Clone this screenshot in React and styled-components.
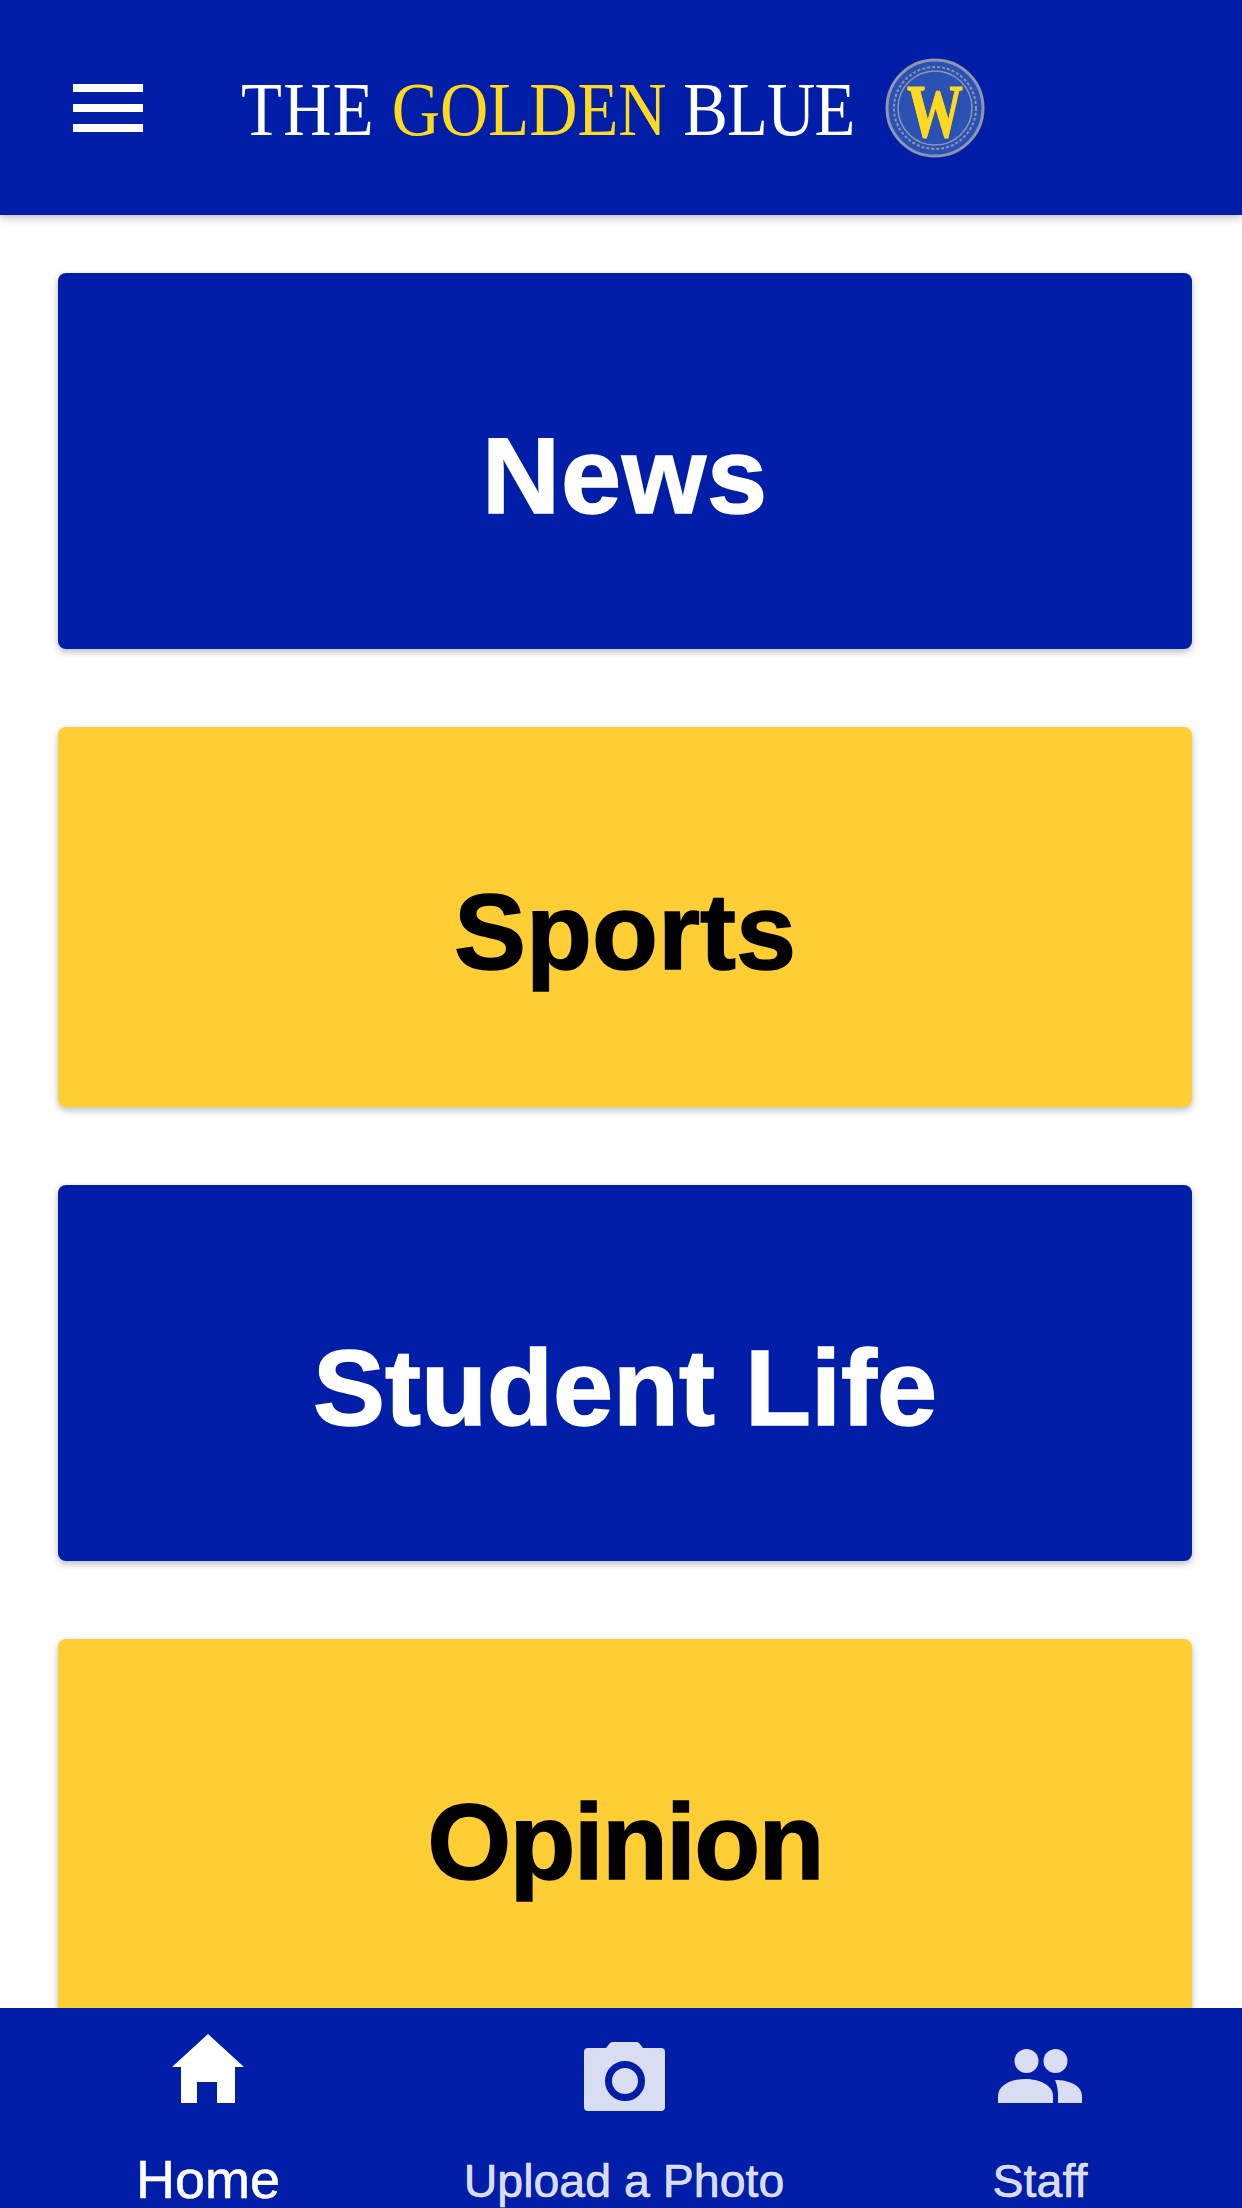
import styled, { createGlobalStyle } from "styled-components"

const BLUE = "#001ea8"
const YELLOW = "#ffcd34"

const GlobalStyle = createGlobalStyle`
  html, body {
    margin: 0;
    padding: 0;
    background: #fff;
    font-family: "Liberation Sans", Arial, sans-serif;
  }
  * { box-sizing: border-box; }
`

const HomeIcon = () => (
  <svg width="72" height="69" viewBox="0 0 72 69" fill="currentColor">
    <path d="M36 0L72 33H63V69H45V48H25V69H9V33H0Z" />
  </svg>
)

const CameraIcon = () => (
  <svg width="81" height="69" viewBox="0 0 81 69" fill="currentColor">
    <path d="M4 6H22L26 1Q27 0 29 0H52Q54 0 55 1L59 6H77Q81 6 81 10V65Q81 69 77 69H4Q0 69 0 65V10Q0 6 4 6Z" />
    <circle cx="41" cy="39" r="16.5" fill="none" stroke={BLUE} strokeWidth="7" />
  </svg>
)

const PeopleIcon = () => (
  <svg width="84" height="54" viewBox="0 0 84 54" fill="currentColor">
    <circle cx="28.5" cy="12" r="12" />
    <circle cx="57.5" cy="12" r="12" />
    <path d="M0 54V47C0 36 14 30 27.5 30C41 30 55 36 55 47V54Z" />
    <path d="M57 31C72 31 84 37 84 47V54H60V47C60 40 59 36 57 31Z" />
  </svg>
)

const sections = [
  { label: "News", height: 376, tone: "blue", tracking: 1 },
  { label: "Sports", height: 380, tone: "yellow", tracking: 0 },
  { label: "Student Life", height: 376, tone: "blue", tracking: 0 },
  { label: "Opinion", height: 376, tone: "yellow", tracking: -1.8 },
]

const tabs = [
  { label: "Home", icon: <HomeIcon />, active: true },
  { label: "Upload a Photo", icon: <CameraIcon /> },
  { label: "Staff", icon: <PeopleIcon /> },
]

export default function App() {
  return (
    <>
      <GlobalStyle />
      <Page>
        <Header>
          <MenuButton>
            <MenuBar />
            <MenuBar />
            <MenuBar />
          </MenuButton>
          <Logo>
            <LogoText>
              <Word $spacing={1.5}>THE</Word> <Word $gold>GOLDEN</Word> <Word $spacing={-1}>BLUE</Word>
            </LogoText>
            <Emblem />
          </Logo>
        </Header>
        <Sections>
          {sections.map(({ label, height, tone, tracking }) => (
            <SectionCard key={label} $height={height} $tone={tone} $tracking={tracking}>
              {label}
            </SectionCard>
          ))}
        </Sections>
        <BottomNav>
          {tabs.map(({ label, icon, active }) => (
            <Tab key={label} $active={active}>
              <TabIcon>{icon}</TabIcon>
              <TabLabel $active={active}>{label}</TabLabel>
            </Tab>
          ))}
        </BottomNav>
      </Page>
    </>
  )
}

function Emblem() {
  return (
    <EmblemSvg viewBox="0 0 100 100">
      <circle cx="50" cy="50" r="48" fill="#2a52b4" stroke="#8f95ad" strokeWidth="3" />
      <circle cx="50" cy="50" r="41" fill="none" stroke="#8f95ad" strokeWidth="2" strokeDasharray="3 2" />
      <circle cx="50" cy="50" r="37" fill="none" stroke="#8f95ad" strokeWidth="1.5" />
      <text
        x="50"
        y="58.5"
        transform="scale(1 1.35)"
        textAnchor="middle"
        fontFamily="Liberation Serif, serif"
        fontWeight="700"
        fontSize="56"
        fill="#ffd91e"
        stroke="#ffd91e"
        strokeWidth="0.8"
      >
        W
      </text>
    </EmblemSvg>
  )
}

const Page = styled.div`
  width: 1242px;
  height: 2208px;
  display: flex;
  flex-direction: column;
  overflow: hidden;
  position: relative;
`

const Header = styled.header`
  flex: none;
  height: 215px;
  background: ${BLUE};
  display: flex;
  align-items: center;
  padding-left: 73px;
  box-shadow: 0 3px 8px rgba(0, 0, 0, 0.25);
  position: relative;
  z-index: 2;
`

const MenuButton = styled.div`
  width: 70px;
  display: flex;
  flex-direction: column;
  gap: 12px;
`

const MenuBar = styled.span`
  display: block;
  height: 8px;
  background: #fff;
`

const Logo = styled.div`
  margin-left: 98px;
  display: flex;
  align-items: center;
`

const LogoText = styled.div`
  width: 612px;
  margin-right: 32px;
  padding-top: 3px;
  color: #fff;
  font-family: "Liberation Serif", "Times New Roman", serif;
  font-size: 76px;
  line-height: 1;
  white-space: nowrap;
  transform: scaleX(0.88);
  transform-origin: left center;
`

const Word = styled.span`
  color: ${(p) => (p.$gold ? "#ffd91e" : "#fff")};
  letter-spacing: ${(p) => p.$spacing || 0}px;
`

const EmblemSvg = styled.svg`
  width: 100px;
  height: 100px;
  flex: none;
`

const Sections = styled.main`
  flex: 1;
  min-height: 0;
  display: flex;
  flex-direction: column;
  gap: 78px;
  padding: 58px 50px 0 58px;
`

const SectionCard = styled.div`
  flex: none;
  height: ${(p) => p.$height}px;
  border-radius: 8px;
  display: flex;
  align-items: center;
  justify-content: center;
  padding-top: 28px;
  font-size: 108px;
  font-weight: 700;
  letter-spacing: ${(p) => p.$tracking}px;
  -webkit-text-stroke: 1.5px currentColor;
  background: ${(p) => (p.$tone === "blue" ? BLUE : YELLOW)};
  color: ${(p) => (p.$tone === "blue" ? "#fff" : "#000")};
  box-shadow: 0 3px 6px rgba(0, 0, 0, 0.18), 0 3px 12px rgba(0, 0, 0, 0.1);
`

const BottomNav = styled.nav`
  flex: none;
  height: 200px;
  background: ${BLUE};
  display: grid;
  grid-template-columns: repeat(3, 416px);
  position: relative;
  z-index: 2;
`

const Tab = styled.div`
  display: flex;
  flex-direction: column;
  align-items: center;
  padding-top: ${(p) => (p.$active ? "15px" : "23px")};
  color: ${(p) => (p.$active ? "#fff" : "rgba(255, 255, 255, 0.85)")};
`

const TabIcon = styled.div`
  height: 90px;
  display: flex;
  align-items: center;
  justify-content: center;
`

const TabLabel = styled.div`
  margin-top: ${(p) => (p.$active ? "34px" : "33px")};
  font-size: ${(p) => (p.$active ? "54px" : "46.5px")};
  line-height: 1.2;
  white-space: nowrap;
  -webkit-text-stroke: 0.6px currentColor;
`
